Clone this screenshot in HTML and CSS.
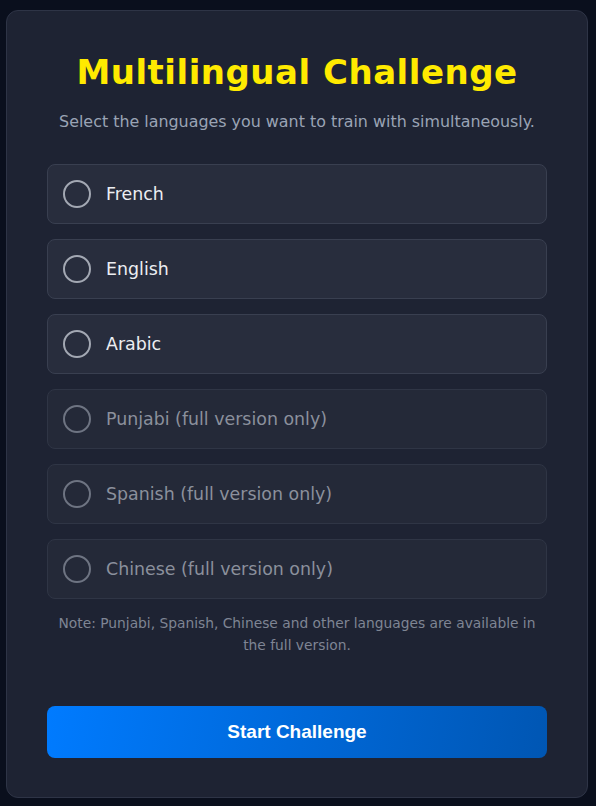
FILE: index.html
```html
<!DOCTYPE html>
<html lang="en">
<head>
<meta charset="utf-8">
<title>Multilingual Challenge</title>
<link rel="stylesheet" href="styles.css">
</head>
<body>
<main class="card">
  <h1 class="title">Multilingual Challenge</h1>
  <p class="subtitle">Select the languages you want to train with simultaneously.</p>
  <ul class="options">
    <li class="option"><span class="radio"></span><span class="label">French</span></li>
    <li class="option"><span class="radio"></span><span class="label">English</span></li>
    <li class="option"><span class="radio"></span><span class="label">Arabic</span></li>
    <li class="option disabled"><span class="radio"></span><span class="label">Punjabi (full version only)</span></li>
    <li class="option disabled"><span class="radio"></span><span class="label">Spanish (full version only)</span></li>
    <li class="option disabled"><span class="radio"></span><span class="label">Chinese (full version only)</span></li>
  </ul>
  <p class="note">Note: Punjabi, Spanish, Chinese and other languages are available in the full version.</p>
  <button class="start">Start Challenge</button>
</main>
</body>
</html>
```
FILE: styles.css
```css
html, body {
  margin: 0;
  padding: 0;
  background: #0a0f1d;
}
body {
  padding: 10px 8px 8px 6px;
  font-family: "DejaVu Sans", "Noto Sans", sans-serif;
}
.card {
  box-sizing: border-box;
  width: 582px;
  background: #1e2333;
  border: 1px solid #2e3446;
  border-radius: 12px;
  padding: 40px 40px 39px;
}
.title {
  margin: 0;
  text-align: center;
  font-family: "DejaVu Sans", sans-serif;
  font-weight: bold;
  font-size: 34px;
  line-height: 42px;
  color: #ffea00;
  letter-spacing: 0.5px;
}
.subtitle {
  margin: 18px 0 0;
  text-align: center;
  font-size: 15.9px;
  line-height: 22px;
  color: #9aa3b5;
}
.options {
  list-style: none;
  margin: 31px 0 0;
  padding: 0;
  display: flex;
  flex-direction: column;
  gap: 15px;
}
.option {
  box-sizing: border-box;
  height: 60px;
  display: flex;
  align-items: center;
  gap: 15px;
  padding: 0 15px;
  background: #282d3d;
  border: 1px solid #393f50;
  border-radius: 8px;
}
.radio {
  box-sizing: border-box;
  width: 28px;
  height: 28px;
  border: 2px solid #a3a8b3;
  border-radius: 50%;
  flex: none;
}
.label {
  font-size: 17.4px;
  color: #eceef2;
}
.option.disabled {
  background: #242938;
  border-color: #2f3545;
}
.option.disabled .radio {
  border-color: #6e7482;
}
.option.disabled .label {
  color: #8b909c;
}
.note {
  margin: 13px 0 0;
  text-align: center;
  font-size: 13.8px;
  line-height: 22px;
  color: #7f8594;
}
.start {
  display: block;
  width: 100%;
  height: 52px;
  margin-top: 50px;
  border: none;
  border-radius: 8px;
  background: linear-gradient(100deg, #007bff 0%, #0056b3 100%);
  color: #ffffff;
  font-family: "Liberation Sans", Arial, sans-serif;
  font-weight: bold;
  font-size: 19px;
}
```
